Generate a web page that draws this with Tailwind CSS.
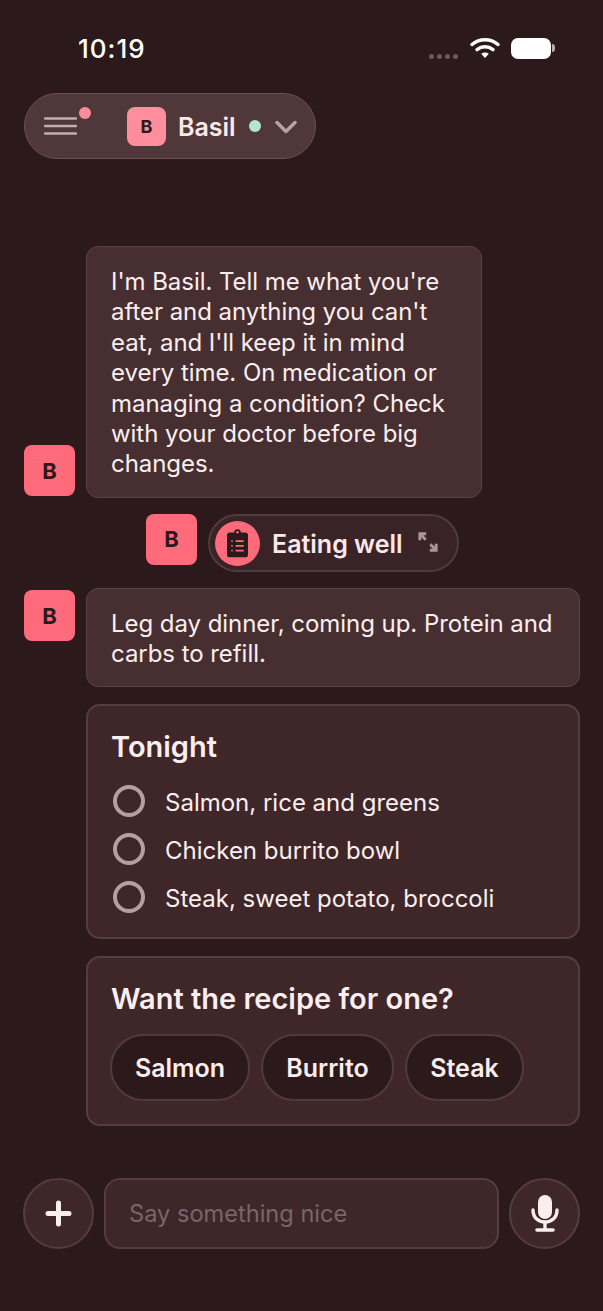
<!DOCTYPE html>
<html><head><meta charset="utf-8">
<script src="https://cdn.jsdelivr.net/npm/@tailwindcss/browser@4"></script>
</head>
<body class="bg-[#2c191c]">
<div class="w-[603px] h-[1311px] overflow-hidden bg-[#2c191c] font-['Inter',sans-serif] text-[#fbeeee] flex flex-col">
  <!-- status bar -->
  <div class="h-[93px] shrink-0 pl-[78px] pr-[48px] pt-[32px] flex items-start justify-between">
    <span class="text-[26px] leading-[33px] font-medium text-white tracking-[1px]">10:19</span>
    <div class="flex items-center pt-[5px]">
      <div class="flex gap-[3px] mt-[17px] mr-[12px]">
        <span class="size-[5px] rounded-full bg-[#6a5a5d]"></span><span class="size-[5px] rounded-full bg-[#6a5a5d]"></span><span class="size-[5px] rounded-full bg-[#6a5a5d]"></span><span class="size-[5px] rounded-full bg-[#6a5a5d]"></span>
      </div>
      <svg class="w-[30px] h-[22px] mr-[11px]" viewBox="0 0 30 22" fill="none" stroke="#fff" stroke-width="3.4" stroke-linecap="round"><path d="M2 7.500C9.500 1.200 20.500 1.200 28 7.500"/><path d="M7 12.600C11.800 8.800 18.200 8.800 23 12.600"/><path d="M15 21l-3.800-4.200c2.200-1.600 5.400-1.600 7.600 0z" fill="#fff" stroke="none"/></svg>
      <div class="w-[40px] h-[21px] rounded-[7px] bg-white"></div>
      <div class="w-[3px] h-[8px] ml-[1px] rounded-r-[3px] bg-[#b8adae]"></div>
    </div>
  </div>
  <!-- header pill -->
  <div class="ml-[24px] w-[292px] h-[66px] shrink-0 rounded-full bg-[#4f373a] border border-[#6b5054] flex items-center relative">
    <svg class="ml-[19px] w-[33px] h-[18px]" viewBox="0 0 33 18" stroke="#c4aeb1" stroke-width="2.4" stroke-linecap="round"><path d="M1 1.500H32M1 9H32M1 16.500H32"/></svg>
    <span class="absolute left-[54px] top-[13px] size-[12px] rounded-full bg-[#ff8c9b]"></span>
    <div class="ml-[50px] size-[39px] rounded-[8px] bg-[#ff8e9c] text-[#2c191c] text-[18px] font-bold flex items-center justify-center">B</div>
    <span class="ml-[12px] pt-[2px] text-[25px] leading-none font-semibold text-[#fbe9ea]">Basil</span>
    <span class="ml-[13px] size-[12px] rounded-full bg-[#b6e6d0]"></span>
    <svg class="ml-[14px] mt-[1px] w-[22px] h-[14px]" viewBox="0 0 22 14" fill="none" stroke="#b8a2a5" stroke-width="3.500" stroke-linecap="round" stroke-linejoin="round"><path d="M2 2.500l9 9 9-9"/></svg>
  </div>
  <!-- message 1 -->
  <div class="mt-[87px] ml-[24px] flex items-end gap-[11px]">
    <div class="mb-[2px] pt-[2px] size-[51px] shrink-0 rounded-[8px] bg-[#ff6b7a] text-[#2c191c] text-[22px] font-bold flex items-center justify-center">B</div>
    <div class="w-[396px] h-[252px] rounded-[12px] bg-[#472e31] border border-[#5c4246] pl-[24px] pr-[20px] pt-[20px] text-[24px] leading-[30.4px] tracking-[-0.05px]">I'm Basil. Tell me what you're after and anything you can't eat, and I'll keep it in mind every time. On medication or managing a condition? Check with your doctor before big changes.</div>
  </div>
  <!-- tool chip -->
  <div class="mt-[16px] ml-[146px] flex items-start gap-[11px]">
    <div class="size-[51px] rounded-[8px] bg-[#ff6b7a] text-[#2c191c] text-[22px] font-bold flex items-center justify-center">B</div>
    <div class="w-[251px] h-[58px] rounded-full bg-[#3a2327] border-2 border-[#503a3e] flex items-center">
      <div class="ml-[5px] size-[45px] rounded-full bg-[#ff6b7a] flex items-center justify-center">
        <svg class="w-[21px] h-[30px]" viewBox="0 0 22 30"><path d="M3 4h4.500a3.500 3.500 0 0 1 7 0H19a3 3 0 0 1 3 3v20a3 3 0 0 1-3 3H3a3 3 0 0 1-3-3V7a3 3 0 0 1 3-3z" fill="#2c191c"/><circle cx="11" cy="3.800" r="1.300" fill="#ff6b7a"/><path d="M4.500 13h1.500M9 13h8.500M4.500 18h1.500M9 18h8.500M4.500 23h1.500M9 23h8.500" stroke="#ff6b7a" stroke-width="1.800" fill="none"/></svg>
      </div>
      <span class="ml-[12px] pt-[2px] text-[25px] leading-none font-semibold text-[#fbe9ea]">Eating well</span>
      <svg class="ml-[15px] mb-[2px] w-[20px] h-[20px]" viewBox="0 0 22 22" fill="none" stroke="#a8969a" stroke-width="3.200"><path d="M2 9V2h7M2 2l6.500 6.500M20 13v7h-7M20 20l-6.500-6.500"/></svg>
    </div>
  </div>
  <!-- message 2 -->
  <div class="mt-[16px] ml-[24px] flex items-start gap-[11px]">
    <div class="mt-[2px] pt-[2px] size-[51px] shrink-0 rounded-[8px] bg-[#ff6b7a] text-[#2c191c] text-[22px] font-bold flex items-center justify-center">B</div>
    <div class="w-[494px] h-[99px] rounded-[12px] bg-[#472e31] border border-[#5c4246] pl-[24px] pr-[16px] pt-[20px] text-[24px] leading-[30.4px] tracking-[-0.05px]">Leg day dinner, coming up. Protein and carbs to refill.</div>
  </div>
  <!-- tonight -->
  <div class="mt-[17px] ml-[86px] w-[494px] h-[235px] rounded-[14px] bg-[#3f2629] border-2 border-[#553c40] pl-[23px] pt-[23px]">
    <h2 class="text-[29px] leading-[36px] font-semibold">Tonight</h2>
    <div class="mt-[22px] flex flex-col gap-[16px]">
      <div class="flex items-center h-[32px]"><span class="ml-[2px] mb-[4px] size-[32px] rounded-full border-4 border-[#b3a0a3]"></span><span class="ml-[20px] text-[24px] leading-none">Salmon, rice and greens</span></div>
      <div class="flex items-center h-[32px]"><span class="ml-[2px] mb-[4px] size-[32px] rounded-full border-4 border-[#b3a0a3]"></span><span class="ml-[20px] text-[24px] leading-none">Chicken burrito bowl</span></div>
      <div class="flex items-center h-[32px]"><span class="ml-[2px] mb-[4px] size-[32px] rounded-full border-4 border-[#b3a0a3]"></span><span class="ml-[20px] text-[24px] leading-none">Steak, sweet potato, broccoli</span></div>
    </div>
  </div>
  <!-- recipe -->
  <div class="mt-[17px] ml-[86px] w-[494px] h-[170px] rounded-[14px] bg-[#3f2629] border-2 border-[#553c40] pl-[22px] pt-[23px]">
    <h2 class="pl-[1px] text-[29px] leading-[36px] font-semibold">Want the recipe for one?</h2>
    <div class="mt-[17px] flex gap-[11px]">
      <div class="w-[140px] h-[67px] pt-[2px] rounded-full bg-[#2c191c] border-2 border-[#503a3e] flex items-center justify-center text-[25px] font-semibold">Salmon</div>
      <div class="w-[133px] h-[67px] pt-[2px] rounded-full bg-[#2c191c] border-2 border-[#503a3e] flex items-center justify-center text-[25px] font-semibold">Burrito</div>
      <div class="w-[119px] h-[67px] pt-[2px] rounded-full bg-[#2c191c] border-2 border-[#503a3e] flex items-center justify-center text-[25px] font-semibold">Steak</div>
    </div>
  </div>
  <!-- composer -->
  <div class="mt-[52px] ml-[23px] flex gap-[10px]">
    <div class="size-[71px] rounded-full bg-[#3f2629] border-2 border-[#553c40] flex items-center justify-center">
      <svg class="size-[27px]" viewBox="0 0 27 27" stroke="#fbeeee" stroke-width="5" stroke-linecap="round"><path d="M13.500 3v21M3 13.500h21"/></svg>
    </div>
    <div class="w-[395px] h-[71px] rounded-[16px] bg-[#3f2629] border-2 border-[#553c40] flex items-center pl-[23px] text-[23.6px] text-[#7a6568]">Say something nice</div>
    <div class="size-[71px] rounded-full bg-[#3f2629] border-2 border-[#553c40] flex items-center justify-center">
      <svg class="w-[28px] h-[37px] mb-[1px]" viewBox="0 0 28 37" fill="none"><rect x="7" y="0" width="14" height="24" rx="7" fill="#fbeeee"/><path d="M2 15c0 7.500 5 12 12 12s12-4.500 12-12" stroke="#fbeeee" stroke-width="3.400" stroke-linecap="round"/><path d="M14 27v7" stroke="#fbeeee" stroke-width="3.400"/><path d="M6 35h16" stroke="#fbeeee" stroke-width="3.600" stroke-linecap="round"/></svg>
    </div>
  </div>
</div>
</body></html>
